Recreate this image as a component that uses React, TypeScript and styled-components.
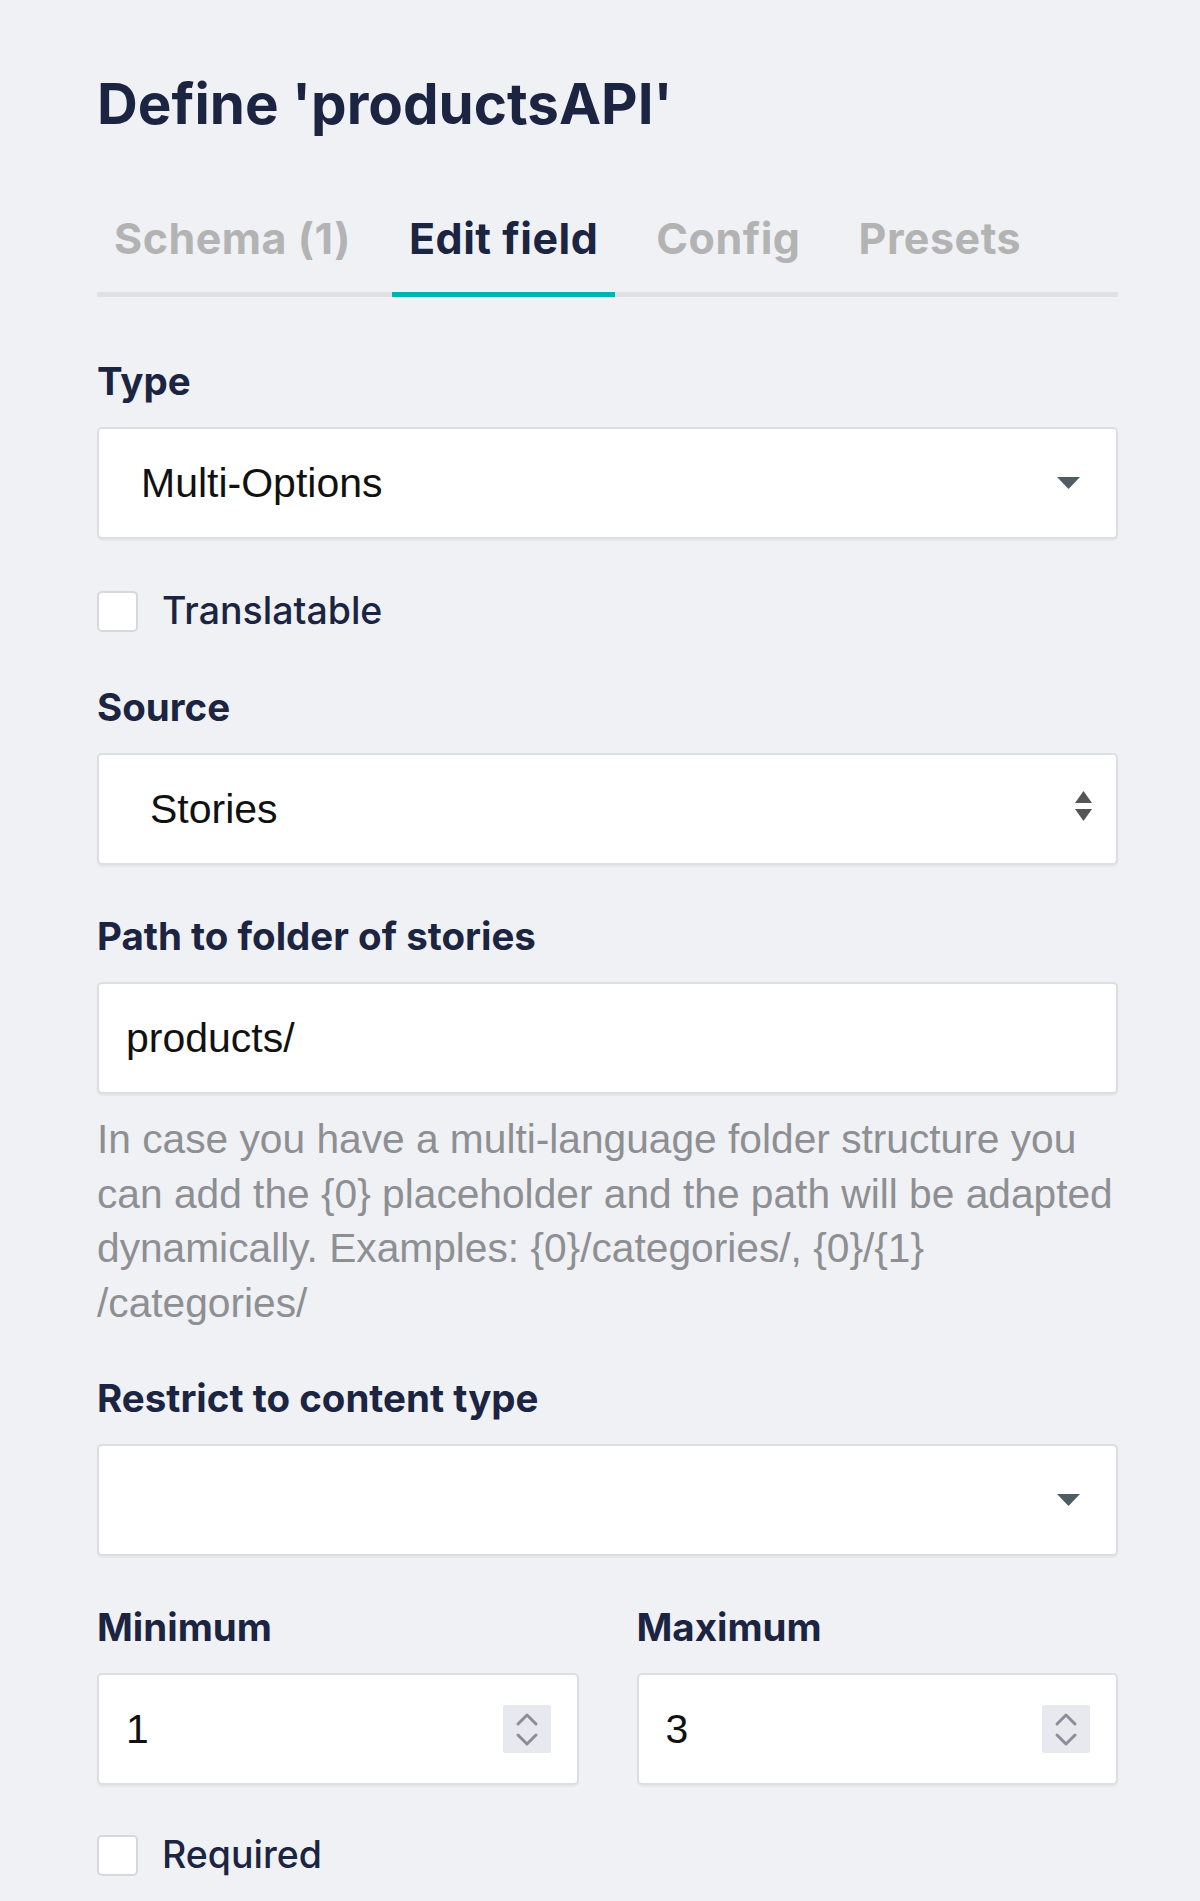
import React from "react";
import styled, { createGlobalStyle } from "styled-components";

const Global = createGlobalStyle`
  html, body { margin: 0; padding: 0; background: #eff1f5; }
  body { font-family: Inter, "Noto Sans", sans-serif; }
`;

const Page = styled.div`
  min-height: 1901px;
  box-sizing: border-box;
  padding: 69px 82px 0 97px;
  background: #eff1f5;
  display: flex;
  flex-direction: column;
`;

const Title = styled.h1`
  margin: 0;
  font-family: Inter, sans-serif;
  font-weight: 700;
  font-size: 56.5px;
  line-height: 70px;
  color: #1b2440;
`;

const TabList = styled.div`
  display: flex;
  margin-top: 74px;
  border-bottom: 5px solid #e0e1e3;
`;

const Tab = styled.div<{ $active?: boolean }>`
  font-family: Inter, sans-serif;
  font-weight: 700;
  font-size: 43px;
  letter-spacing: 0.5px;
  line-height: 50px;
  padding: 0 17px 29px;
  margin-right: 24px;
  margin-bottom: -5px;
  color: ${(p) => (p.$active ? "#1b2440" : "#b3b3b3")};
  border-bottom: 5px solid ${(p) => (p.$active ? "#00b3b0" : "transparent")};
`;

const Label = styled.div<{ $mt: number }>`
  margin-top: ${(p) => p.$mt}px;
  margin-bottom: 23px;
  font-family: Inter, sans-serif;
  font-weight: 700;
  font-size: 38.5px;
  line-height: 46px;
  color: #1b2440;
`;

const Field = styled.div<{ $pl: number; $pr: number }>`
  box-sizing: border-box;
  height: 112px;
  background: #fff;
  border: 2px solid #dcdee2;
  border-radius: 5px;
  box-shadow: 0 2px 1px rgba(0, 0, 0, 0.04);
  display: flex;
  align-items: center;
  padding: 0 ${(p) => p.$pr}px 0 ${(p) => p.$pl}px;
  font-family: "Liberation Sans", Arial, sans-serif;
  font-size: 41px;
  color: #111;
`;

const Value = styled.span`
  flex: 1;
`;

const CheckRow = styled.label<{ $mt: number }>`
  margin-top: ${(p) => p.$mt}px;
  display: flex;
  align-items: center;
  gap: 24px;
`;

const CheckBox = styled.span`
  box-sizing: border-box;
  width: 41px;
  height: 41px;
  background: #fff;
  border: 2px solid #d6d8dc;
  border-radius: 5px;
`;

const CheckText = styled.span`
  font-family: Inter, sans-serif;
  font-weight: 500;
  font-size: 37.5px;
  line-height: 44px;
  color: #1b2440;
`;

const Help = styled.p`
  margin: 18px 0 0;
  font-family: "Liberation Sans", Arial, sans-serif;
  font-size: 40.7px;
  line-height: 54.5px;
  color: #8e8f92;
  white-space: nowrap;
`;

const Pair = styled.div`
  display: grid;
  grid-template-columns: 1fr 1fr;
  column-gap: 58px;
`;

const Column = styled.div`
  display: flex;
  flex-direction: column;
`;

const Spinner = styled.span`
  width: 48px;
  height: 48px;
  background: #e8e9ee;
  border-radius: 2px;
  display: flex;
  align-items: center;
  justify-content: center;
`;

const Caret = () => (
  <svg width="23" height="12" viewBox="0 0 23 12">
    <path d="M0 0 H23 L11.5 12 Z" fill="#4c5e63" />
  </svg>
);

const UpDown = () => (
  <svg width="17" height="30" viewBox="0 0 17 30" style={{ marginTop: -6 }}>
    <path d="M0 12 L8.5 0 L17 12 Z" fill="#555" />
    <path d="M0 18 H17 L8.5 30 Z" fill="#555" />
  </svg>
);

const Chevrons = () => (
  <svg width="48" height="48" viewBox="0 0 48 48">
    <path d="M15 19 L24 10 L33 19" stroke="#8b8e99" strokeWidth="3" fill="none" strokeLinecap="round" strokeLinejoin="round" />
    <path d="M15 30 L24 39 L33 30" stroke="#8b8e99" strokeWidth="3" fill="none" strokeLinecap="round" strokeLinejoin="round" />
  </svg>
);

export default function App() {
  return (
    <>
      <Global />
      <Page>
        <Title>Define 'productsAPI'</Title>
        <TabList>
          <Tab>Schema (1)</Tab>
          <Tab $active>Edit field</Tab>
          <Tab>Config</Tab>
          <Tab>Presets</Tab>
        </TabList>

        <Label $mt={61}>Type</Label>
        <Field $pl={42} $pr={36}>
          <Value>Multi-Options</Value>
          <Caret />
        </Field>

        <CheckRow $mt={50}>
          <CheckBox />
          <CheckText>Translatable</CheckText>
        </CheckRow>

        <Label $mt={51}>Source</Label>
        <Field $pl={51} $pr={24}>
          <Value>Stories</Value>
          <UpDown />
        </Field>

        <Label $mt={48}>Path to folder of stories</Label>
        <Field $pl={27} $pr={24}>
          <Value>products/</Value>
        </Field>
        <Help>
          In case you have a multi-language folder structure you
          <br />
          can add the {"{0}"} placeholder and the path will be adapted
          <br />
          dynamically. Examples: {"{0}"}/categories/, {"{0}/{1}"}
          <br />
          /categories/
        </Help>

        <Label $mt={45}>Restrict to content type</Label>
        <Field $pl={42} $pr={36}>
          <Value />
          <Caret />
        </Field>

        <Pair>
          <Column>
            <Label $mt={48}>Minimum</Label>
            <Field $pl={27} $pr={26}>
              <Value>1</Value>
              <Spinner>
                <Chevrons />
              </Spinner>
            </Field>
          </Column>
          <Column>
            <Label $mt={48}>Maximum</Label>
            <Field $pl={27} $pr={26}>
              <Value>3</Value>
              <Spinner>
                <Chevrons />
              </Spinner>
            </Field>
          </Column>
        </Pair>

        <CheckRow $mt={48}>
          <CheckBox />
          <CheckText>Required</CheckText>
        </CheckRow>
      </Page>
    </>
  );
}
